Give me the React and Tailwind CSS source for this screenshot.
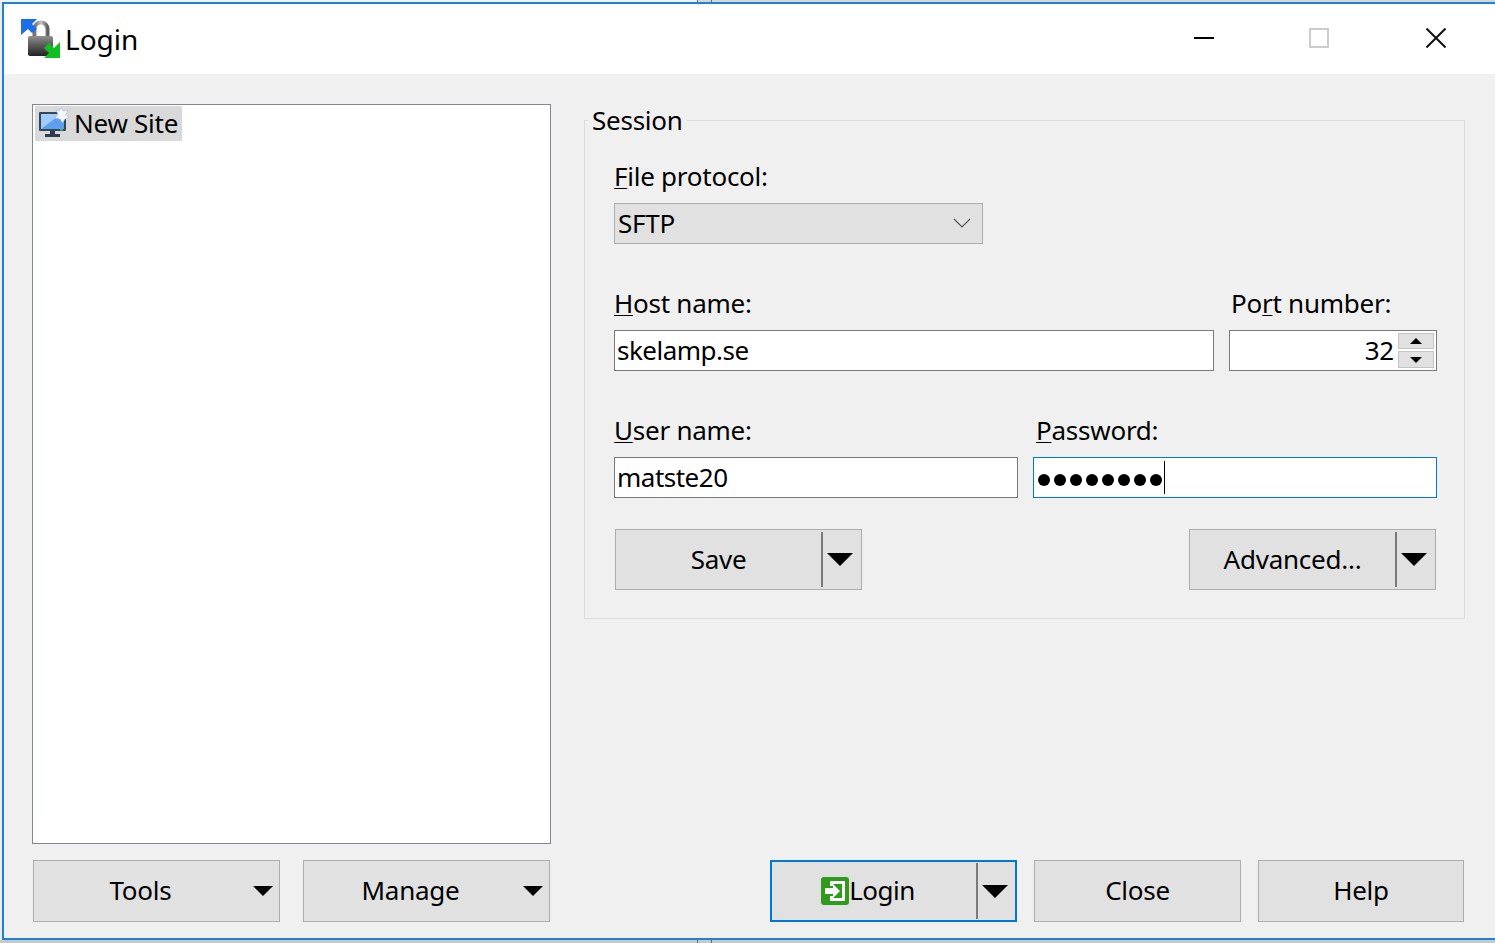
import React from "react";

const font = { fontFamily: '"Noto Sans","Open Sans",sans-serif' };

function Tri({ w = 26, h = 13 }) {
  return (
    <svg width={w} height={h} viewBox="0 0 26 13" preserveAspectRatio="none">
      <polygon points="0,0 26,0 13,13" fill="#000" />
    </svg>
  );
}

function U({ c, rest }) {
  return (
    <span>
      <span className="underline underline-offset-2 decoration-1">{c}</span>
      {rest}
    </span>
  );
}

function SplitBtn({ label }) {
  return (
    <div className="flex items-center border border-[#adadad] bg-[#e1e1e1] h-[61px] w-[247px]">
      <span className="flex-1 text-center pb-[2px]">{label}</span>
      <span className="w-[2px] self-stretch bg-[#7a7a7a] my-[2px]" />
      <span className="w-[38px] flex justify-start pl-[4px]"><Tri /></span>
    </div>
  );
}

function MenuBtn({ label }) {
  return (
    <div className="relative flex items-center justify-center border border-[#adadad] bg-[#e1e1e1] h-[62px] w-[247px] pr-[32px] pb-[2px]">
      <span>{label}</span>
      <span className="absolute right-[6px] top-[25px] flex"><Tri w={20} h={10} /></span>
    </div>
  );
}

function Btn({ label, w }) {
  return (
    <div className={`flex items-center justify-center border border-[#adadad] bg-[#e1e1e1] h-[62px] pb-[2px] ${w}`}>{label}</div>
  );
}

function AppIcon() {
  return (
    <svg width="42" height="42" viewBox="0 0 42 42" className="shrink-0">
      <defs>
        <linearGradient id="lockBody" x1="0" y1="0" x2="0" y2="1">
          <stop offset="0" stopColor="#8f8f8f" />
          <stop offset="0.45" stopColor="#5c5c5c" />
          <stop offset="1" stopColor="#222222" />
        </linearGradient>
        <linearGradient id="shackle" x1="0" y1="0" x2="1" y2="0">
          <stop offset="0" stopColor="#707070" />
          <stop offset="0.5" stopColor="#c4c4c4" />
          <stop offset="1" stopColor="#5f5f5f" />
        </linearGradient>
      </defs>
      <path d="M14.5 20V11a6.5 6.5 0 0 1 13 0v9" fill="none" stroke="url(#shackle)" strokeWidth="4" />
      <rect x="8" y="18" width="25" height="20" rx="2" fill="url(#lockBody)" />
      <path d="M1 17V1h16l-5 5 5 5-5 4-4-4z" fill="#1a6fe8" />
      <path d="M40 24v16H24l5-5-5-5 5-5 5 5z" fill="#10c020" />
    </svg>
  );
}

function SiteIcon() {
  return (
    <svg width="31" height="31" viewBox="0 0 31 31" className="shrink-0">
      <rect x="1" y="4" width="27" height="19" rx="1" fill="#34465a" />
      <rect x="3" y="6" width="23" height="15" fill="#5f9ff0" />
      <path d="M3 21V6h20z" fill="#a3cbfa" />
      <rect x="22" y="21" width="3" height="1.5" fill="#3cc040" />
      <rect x="12" y="23" width="5" height="3" fill="#2f3b4a" />
      <rect x="7" y="26" width="15" height="3" fill="#2f3b4a" />
      <polygon points="23,0 25.5,3 30,2 28,6.5 31,10 27,11 24.5,15 22,11 17,10 20,6.5 18,2 21,3" fill="#f2f5fa" stroke="#a9b8ca" strokeWidth="0.6" />
    </svg>
  );
}

function LoginIcon() {
  return (
    <svg width="28" height="28" viewBox="0 0 28 28" className="shrink-0">
      <rect x="0" y="0" width="28" height="28" rx="3" fill="#2f9a1c" />
      <path d="M9 4h15v20H9v-5h3v2h9V7h-9v2H9z" fill="#fff" />
      <path d="M4 11h8V7l7 7-7 7v-4H4z" fill="#fff" />
    </svg>
  );
}

function EdgeStrip({ h, left, right }) {
  return (
    <div className={`flex w-[1497px] shrink-0 ${h}`}>
      <span className={`w-[697px] ${left}`} />
      <span className="w-px bg-[#6a6a6a]" />
      <span className={`w-[13px] ${right}`} />
      <span className="w-px bg-[#6a6a6a]" />
      <span className={`flex-1 ${right}`} />
    </div>
  );
}

export default function App() {
  return (
    <div style={font} className="w-[1495px] h-[943px] overflow-hidden bg-[#ededed] text-[26px] tracking-[-0.25px] leading-none text-black">
      <div className="w-[1497px] h-[943px] flex flex-col">
        <EdgeStrip h="h-[2px]" left="bg-[#f2f2f2]" right="bg-[#d6d6d6]" />
        <div className="flex-1 min-h-0 ml-[2px] flex flex-col border-2 border-[#1c82d9] bg-[#f0f0f0]">
          <div className="h-[70px] shrink-0 bg-white flex items-center pl-[16px]">
            <AppIcon />
            <span className="ml-[3px] text-[28px] tracking-normal">Login</span>
            <div className="ml-auto flex items-center">
              <span className="w-[116px] flex justify-center pr-[2px] mb-[2px]"><span className="w-[20px] h-[2px] bg-black" /></span>
              <span className="w-[116px] flex justify-center pr-[4px] mb-[2px]"><span className="w-[20px] h-[20px] border-2 border-[#cccccc]" /></span>
              <span className="w-[116px] flex justify-center pr-[2px] mb-[2px]">
                <svg width="20" height="20" viewBox="0 0 20 20"><path d="M0.5 0.5l19 19M19.5 0.5l-19 19" stroke="#111" strokeWidth="2" /></svg>
              </span>
            </div>
          </div>

          <div className="flex-1 flex flex-col pl-[28px] pr-[29px]">
            <div className="flex-1 flex pt-[30px]">
              <div className="w-[519px] h-[740px] border border-[#828790] bg-white pt-[1px] pl-[2px]">
                <div className="inline-flex items-center h-[35px] bg-[#d9d9d9] pl-[3px] pr-[4px]">
                  <SiteIcon />
                  <span className="ml-[5px] mb-[2px]">New Site</span>
                </div>
              </div>

              <div className="relative ml-[33px] mt-[16px] w-[881px] h-[499px] border border-[#dcdcdc] pl-[29px] pr-[27px]">
                <span className="absolute left-[3px] -top-[16px] bg-[#f0f0f0] px-[4px] h-[30px] flex items-center">Session</span>

                <div className="mt-[40px] h-[30px] flex items-center"><U c="F" rest="ile protocol:" /></div>
                <div className="mt-[12px] w-[369px] h-[41px] border border-[#adadad] bg-[#e1e1e1] flex items-center pl-[3px] pb-[1px]">
                  <span>SFTP</span>
                  <svg width="18" height="10" viewBox="0 0 18 10" className="ml-auto mr-[11px]"><path d="M1 1l8 8 8-8" fill="none" stroke="#555" strokeWidth="1.2" /></svg>
                </div>

                <div className="mt-[44px] flex h-[30px] items-center">
                  <div className="w-[617px]"><U c="H" rest="ost name:" /></div>
                  <span>Po<span className="underline underline-offset-2 decoration-1">r</span>t number:</span>
                </div>
                <div className="mt-[12px] flex justify-between">
                  <div className="w-[600px] h-[41px] border border-[#7a7a7a] bg-white flex items-center pl-[2px] pb-[2px] tracking-[-0.5px]">skelamp.se</div>
                  <div className="w-[208px] h-[41px] border border-[#7a7a7a] bg-white flex items-center justify-end">
                    <span className="mr-[4px] pb-[2px]">32</span>
                    <div className="w-[38px] flex flex-col gap-[2px] pl-[0px] pr-[2px]">
                      <span className="h-[16px] border border-[#c4c4c4] bg-[#e1e1e1] flex items-center justify-center">
                        <svg width="12" height="6" viewBox="0 0 12 6"><polygon points="6,0 12,6 0,6" /></svg>
                      </span>
                      <span className="h-[17px] border border-[#c4c4c4] bg-[#e1e1e1] flex items-center justify-center">
                        <svg width="12" height="6" viewBox="0 0 12 6"><polygon points="0,0 12,0 6,6" /></svg>
                      </span>
                    </div>
                  </div>
                </div>

                <div className="mt-[44px] flex h-[30px] items-center">
                  <div className="w-[422px]"><U c="U" rest="ser name:" /></div>
                  <U c="P" rest="assword:" />
                </div>
                <div className="mt-[12px] flex justify-between">
                  <div className="w-[404px] h-[41px] border border-[#7a7a7a] bg-white flex items-center pl-[2px] pb-[2px] tracking-[-0.5px]">matste20</div>
                  <div className="w-[404px] h-[41px] border border-[#0078d7] bg-white flex items-center pl-[4px]">
                    <div className="flex gap-[4px] mt-[4px]">
                      {[0, 1, 2, 3, 4, 5, 6, 7].map((i) => (
                        <span key={i} className="w-[12px] h-[12px] rounded-full bg-black" />
                      ))}
                    </div>
                    <span className="ml-[2px] w-px h-[33px] bg-black" />
                  </div>
                </div>

                <div className="mt-[31px] flex justify-between pl-[1px] pr-[1px]">
                  <SplitBtn label="Save" />
                  <SplitBtn label="Advanced..." />
                </div>
              </div>
            </div>

            <div className="flex items-start h-[78px] pl-[1px]">
              <MenuBtn label="Tools" />
              <div className="ml-[23px]"><MenuBtn label="Manage" /></div>
              <div className="ml-[220px] flex items-center border-2 border-[#0078d7] bg-[#e1e1e1] h-[62px] w-[247px]">
                <span className="flex-1 flex items-center justify-center pr-[12px]">
                  <LoginIcon />
                  <span className="pb-[2px] tracking-[-0.5px]">Login</span>
                </span>
                <span className="w-[2px] self-stretch bg-[#7a7a7a] my-[1px]" />
                <span className="w-[37px] flex justify-start pl-[4px]"><Tri /></span>
              </div>
              <div className="ml-[17px]"><Btn label="Close" w="w-[207px]" /></div>
              <div className="ml-[17px]"><Btn label="Help" w="w-[206px]" /></div>
            </div>
          </div>
        </div>
        <EdgeStrip h="h-[3px]" left="bg-[#c8c8c8]" right="bg-[#c8c8c8]" />
      </div>
    </div>
  );
}
